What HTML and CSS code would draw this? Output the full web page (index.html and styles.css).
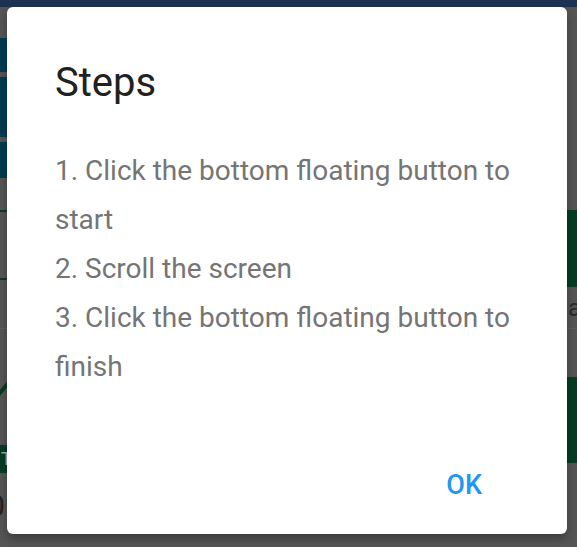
FILE: index.html
```html
<!DOCTYPE html>
<html lang="en">
<head>
  <meta charset="UTF-8" />
  <meta name="viewport" content="width=device-width, initial-scale=1.0"/>
  <title>Steps</title>
  <link rel="stylesheet" href="styles.css">
</head>
<body>

  <!-- app behind the dialog (already dimmed) -->
  <div class="app">
    <div class="statusbar"></div>
    <div class="gap h31"></div>
    <div class="bar h34"></div>
    <div class="gap h5"></div>
    <div class="bar h60"></div>
    <div class="gap h5"></div>
    <div class="bar h36"></div>
    <div class="gap h32"></div>

    <div class="row">
      <div class="outline-box"></div>
      <div class="green-btn"></div>
    </div>

    <div class="row label-row">
      <span></span>
      <span class="label">a</span>
    </div>
    <div class="divider"></div>

    <div class="row shapes">
      <div class="left-col">
        <svg class="check" width="20" height="20" viewBox="0 0 20 20">
          <path d="M-2 18 L12 2" stroke="#063c23" stroke-width="4" fill="none"/>
        </svg>
        <div class="tag">T</div>
        <div class="zero">0</div>
      </div>
      <svg class="hex" width="20" height="86" viewBox="0 0 20 86">
        <polygon points="10,0 20,0 20,86 10,86 0,68 0,18" fill="#063c23"/>
      </svg>
    </div>
  </div>

  <div class="dialog">
    <h2 class="title">Steps</h2>
    <div class="msg">
      1. Click the bottom floating button to start<br>
      2. Scroll the screen<br>
      3. Click the bottom floating button to finish
    </div>
    <div class="actions">
      <button class="ok">OK</button>
    </div>
  </div>

</body>
</html>
```

FILE: styles.css
```css
body {
  margin: 0;
  background: #555555;
  font-family: Roboto, "Liberation Sans", sans-serif;
  overflow: hidden;
}

.app {
  display: flex;
  flex-direction: column;
  width: 577px;
  height: 547px;
}

.statusbar {
  height: 7px;
  background: #1d3150;
}

.h31 { height: 31px; }
.h34 { height: 34px; }
.h5 { height: 5px; }
.h60 { height: 60px; }
.h36 { height: 36px; }
.h32 { height: 32px; }

.bar {
  width: 120px;
  background: #033a51;
}

.row {
  display: flex;
  justify-content: space-between;
}

.outline-box {
  width: 120px;
  height: 66px;
  border-top: 2px solid #0a3d22;
  border-bottom: 2px solid #0a3d22;
}

.green-btn {
  width: 60px;
  height: 77px;
  background: #063c23;
}

.label-row {
  height: 41px;
  align-items: center;
}

.label {
  font-size: 24px;
  color: #2b2b2b;
  margin-right: -4px;
}

.divider {
  height: 1px;
  background: #5e5e5e;
}

.shapes {
  margin-top: 48px;
}

.left-col {
  display: flex;
  flex-direction: column;
}

.check {
  display: block;
}

.tag {
  margin-top: 48px;
  width: 60px;
  height: 28px;
  background: #063c23;
  color: #9ab;
  font-size: 18px;
  line-height: 28px;
  padding-left: 1px;
}

.zero {
  margin-top: 18px;
  font-size: 30px;
  line-height: 30px;
  color: #222;
  margin-left: -12px;
}

.hex {
  display: block;
}

.dialog {
  position: absolute;
  top: 7px;
  left: 7px;
  width: 560px;
  height: 527px;
  box-sizing: border-box;
  background: #fff;
  border-radius: 6px;
  box-shadow: 0 5px 10px rgba(0,0,0,0.3);
  padding: 54px 48px 0 48px;
  display: flex;
  flex-direction: column;
}

.title {
  margin: 0;
  font-size: 40px;
  line-height: 44px;
  font-weight: 400;
  color: #212121;
}

.msg {
  margin-top: 41px;
  font-size: 28px;
  line-height: 49px;
  color: #757575;
}

.actions {
  display: flex;
  justify-content: flex-end;
  margin-top: 79px;
  padding-right: 37px;
}

.ok {
  border: none;
  background: none;
  padding: 0;
  font-family: Roboto, "Liberation Sans", sans-serif;
  font-size: 27px;
  font-weight: 500;
  color: #2196f3;
  line-height: 30px;
}
```
